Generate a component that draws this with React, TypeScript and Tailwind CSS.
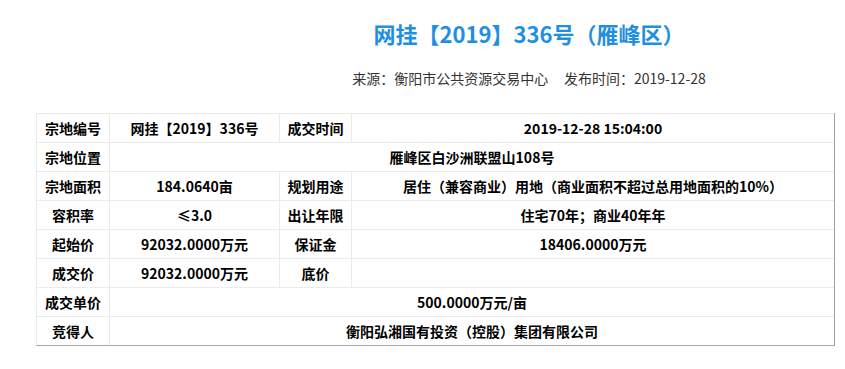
import React from "react";

const font = { fontFamily: '"Noto Sans CJK SC", "Noto Sans", sans-serif' };

type Cell = { text: string; span?: number };
const rows: Cell[][] = [
  [{ text: "宗地编号" }, { text: "网挂【2019】336号" }, { text: "成交时间" }, { text: "2019-12-28 15:04:00" }],
  [{ text: "宗地位置" }, { text: "雁峰区白沙洲联盟山108号", span: 3 }],
  [{ text: "宗地面积" }, { text: "184.0640亩" }, { text: "规划用途" }, { text: "居住（兼容商业）用地（商业面积不超过总用地面积的10%）" }],
  [{ text: "容积率" }, { text: "≤3.0" }, { text: "出让年限" }, { text: "住宅70年；商业40年年" }],
  [{ text: "起始价" }, { text: "92032.0000万元" }, { text: "保证金" }, { text: "18406.0000万元" }],
  [{ text: "成交价" }, { text: "92032.0000万元" }, { text: "底价" }, { text: "" }],
  [{ text: "成交单价" }, { text: "500.0000万元/亩", span: 3 }],
  [{ text: "竞得人" }, { text: "衡阳弘湘国有投资（控股）集团有限公司", span: 3 }],
];

const App: React.FC = () => {
  return (
    <div className="w-[845px] h-[369px] bg-white overflow-hidden" style={font}>
      {/* header */}
      <div className="pl-[213px] pt-[16px] text-center">
        <h1 className="text-[22px] leading-[34px] font-bold text-[#1e8fe1]">网挂【2019】336号（雁峰区）</h1>
        <p className="mt-[18px] text-[14px] leading-[20px] text-[#333]">
          来源：衡阳市公共资源交易中心&nbsp;&nbsp;&nbsp;&nbsp;&nbsp;发布时间：2019-12-28
        </p>
      </div>

      {/* table */}
      <div className="pl-[36px] pt-[25px]">
        <table className="border-separate border-spacing-0 table-fixed border-r border-b border-r-[#a0a0a0] border-b-[#a8a8a8] text-[14px] font-bold text-black">
          <colgroup>
            <col className="w-[73px]" />
            <col className="w-[170px]" />
            <col className="w-[72px]" />
            <col className="w-[483px]" />
          </colgroup>
          <tbody>
            {rows.map((row, i) => (
              <tr key={i} className="h-[29px]">
                {row.map((c, j) => (
                  <td
                    key={j}
                    colSpan={c.span}
                    className="border-l border-t border-[#ebebeb] text-center align-middle p-0 leading-[28px]"
                  >
                    {c.text}
                  </td>
                ))}
              </tr>
            ))}
          </tbody>
        </table>
      </div>
    </div>
  );
};

export default App;
